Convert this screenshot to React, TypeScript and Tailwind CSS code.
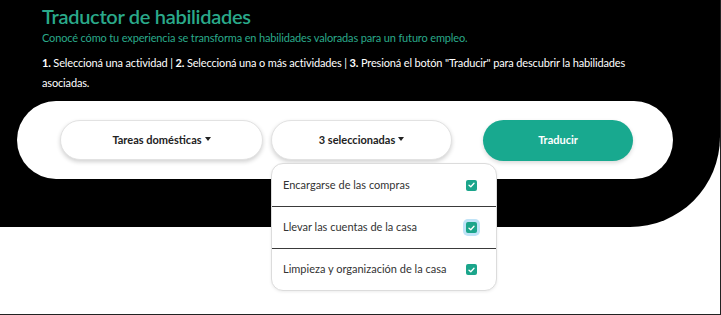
import React, { useState } from 'react';

const FONT = { fontFamily: 'Lato, "Open Sans", sans-serif' };

const OPTIONS = [
  'Encargarse de las compras',
  'Llevar las cuentas de la casa',
  'Limpieza y organización de la casa',
];

function Caret() {
  return <span className="ml-[3px] inline-block align-middle border-x-[3px] border-t-[4px] border-x-transparent border-t-[#222] -translate-y-[2px]" />;
}

function Check({ focused }: { focused?: boolean }) {
  return (
    <span className={`flex items-center justify-center w-[11px] h-[11px] rounded-[2px] bg-[#1ba58b] ${focused ? 'ring-[3px] ring-[#bfe3f7]' : ''}`}>
      <svg width="7" height="6" viewBox="0 0 7 6" fill="none">
        <path d="M1 3.2 L2.8 4.8 L6 1.2" stroke="white" strokeWidth="1.3" strokeLinecap="round" strokeLinejoin="round" />
      </svg>
    </span>
  );
}

function App() {
  const [checked] = useState([true, true, true]);

  return (
    <div className="relative w-[721px] h-[315px] overflow-hidden bg-white border-r border-b border-[#222]" style={FONT}>
      {/* Black header section */}
      <div className="h-[227px] bg-black rounded-br-[90px] pt-[3px]">
        <div className="pl-[42px]">
          <h1 className="text-[20px] leading-[26px] font-semibold tracking-[-0.3px] text-[#2aa98a]">Traductor de habilidades</h1>
          <p className="mt-[1px] text-[11px] leading-[16px] tracking-[-0.15px] text-[#2aa98a]">
            Conocé cómo tu experiencia se transforma en habilidades valoradas para un futuro empleo.
          </p>
          <p className="mt-[7px] w-[600px] text-[11px] leading-[20px] tracking-[-0.15px] text-white">
            <b>1.</b> Seleccioná una actividad | <b>2.</b> Seleccioná una o más actividades | <b>3.</b> Presioná el botón "Traducir" para descubrir la habilidades asociadas.
          </p>
        </div>

        {/* White pill with controls */}
        <div className="mt-[8px] ml-[17px] w-[656px] h-[78px] bg-white rounded-full flex items-center pl-[43px]">
          <button className="w-[203px] h-[40px] rounded-full bg-white border border-[#e2e2e2] shadow-[0_2px_4px_rgba(0,0,0,0.18)] text-[11px] font-bold text-[#222]">
            Tareas domésticas<Caret />
          </button>
          <button className="ml-[8px] w-[181px] h-[40px] rounded-full bg-white border border-[#e2e2e2] shadow-[0_2px_4px_rgba(0,0,0,0.18)] text-[11px] font-bold text-[#222]">
            3 seleccionadas<Caret />
          </button>
          <button className="ml-[31px] w-[150px] h-[41px] rounded-full bg-[#18a98f] shadow-[0_2px_4px_rgba(0,0,0,0.15)] text-[11px] font-bold text-white">
            Traducir
          </button>
        </div>
      </div>

      {/* Dropdown menu */}
      <div className="absolute left-[271px] top-[163px] w-[226px] bg-white border border-[#dcdcdc] rounded-[12px] shadow-[0_1px_3px_rgba(0,0,0,0.08)] overflow-hidden">
        {OPTIONS.map((o, i) => (
          <div
            key={o}
            className={`flex items-center justify-between h-[42px] pl-[11px] pr-[19px] text-[11px] text-[#333] ${i > 0 ? 'border-t border-[#3a3a3a]' : ''}`}
          >
            <span>{o}</span>
            {checked[i] && <Check focused={i === 1} />}
          </div>
        ))}
      </div>
    </div>
  );
}

export default App;
